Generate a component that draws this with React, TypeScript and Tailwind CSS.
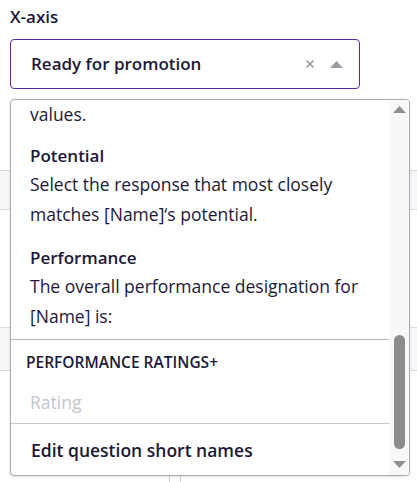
import { X } from 'lucide-react'

const font = { fontFamily: '"Open Sans", Lato, sans-serif' }

function Caret({ up = true, className = '' }: { up?: boolean; className?: string }) {
  return (
    <svg width="13" height="8" viewBox="0 0 13 8" className={className}>
      <path d={up ? 'M0 8 L6.5 1 L13 8 Z' : 'M0 0 L6.5 7 L13 0 Z'} fill="currentColor" />
    </svg>
  )
}

export default function App() {
  return (
    <div className="relative h-[482px] w-[417px] overflow-hidden bg-white text-[#1b1838]" style={font}>
      <div className="px-[10px] pt-[6px]">
        <div className="text-[17px] font-semibold leading-[22px]">X-axis</div>
        <div className="mt-[11px] flex h-[50px] w-[350px] items-center rounded-[4px] border border-[#5a2a9c] pl-[20px] pr-[16px]">
          <span className="flex-1 text-[17px] font-semibold">Ready for promotion</span>
          <X className="h-[12px] w-[12px] text-[#9a9aa2]" strokeWidth={3.5} />
          <Caret className="ml-[14px] text-[#9a9aa2]" />
        </div>
      </div>

      {/* table behind the menu */}
      <div className="mt-[81px] h-[40px] border-y border-[#dadade] bg-[#f7f7f9]" />
      <div className="mt-[117px] h-[44px] border-y border-[#dadade] bg-[#f7f7f9]" />
      <div className="mt-[102px] ml-[169px] h-[10px] w-[12px] border-x border-[#d0d0d4]" />

      <div className="absolute left-[10px] top-[99px] flex h-[377px] w-[400px] overflow-hidden rounded-[4px] border border-[#a9a9b0] bg-white shadow-sm">
        <div className="flex-1">
          <div className="-mt-[1px] pl-[19px] text-[17.5px] leading-[30px]">values.</div>
          <div className="mt-[14px] pl-[19px] text-[17px] font-semibold leading-[26px]">Potential</div>
          <div className="pl-[19px] pr-[4px] text-[17.5px] leading-[30px]">
            Select the response that most closely
            <br />
            matches [Name]‘s potential.
          </div>
          <div className="mt-[16px] pl-[19px] text-[17px] font-semibold leading-[26px]">Performance</div>
          <div className="pl-[19px] pr-[4px] text-[17.5px] leading-[30px] whitespace-nowrap">
            The overall performance designation for
            <br />
            [Name] is:
          </div>
          <div className="mt-[8px] border-t border-[#b4b4bc]" />
          <div className="mt-[12px] pl-[15px] text-[15.5px] font-semibold uppercase leading-[20px]">Performance Ratings+</div>
          <div className="mt-[15px] pl-[19px] text-[17.5px] leading-[30px] text-[#c4c4ca]">Rating</div>
          <div className="mt-[6px] border-t border-[#c8c8ce]" />
          <div className="mt-[11px] pl-[20px] text-[17.5px] font-semibold leading-[30px]">Edit question short names</div>
        </div>
        <div className="flex w-[20px] flex-col items-center bg-[#f8f8f8] py-[5px]">
          <Caret className="text-[#909090]" />
          <div className="flex-1" />
          <div className="h-[114px] w-[11px] rounded-full bg-[#8c8c8c]" />
          <Caret up={false} className="mt-[12px] mb-[1px] text-[#909090]" />
        </div>
      </div>
    </div>
  )
}
